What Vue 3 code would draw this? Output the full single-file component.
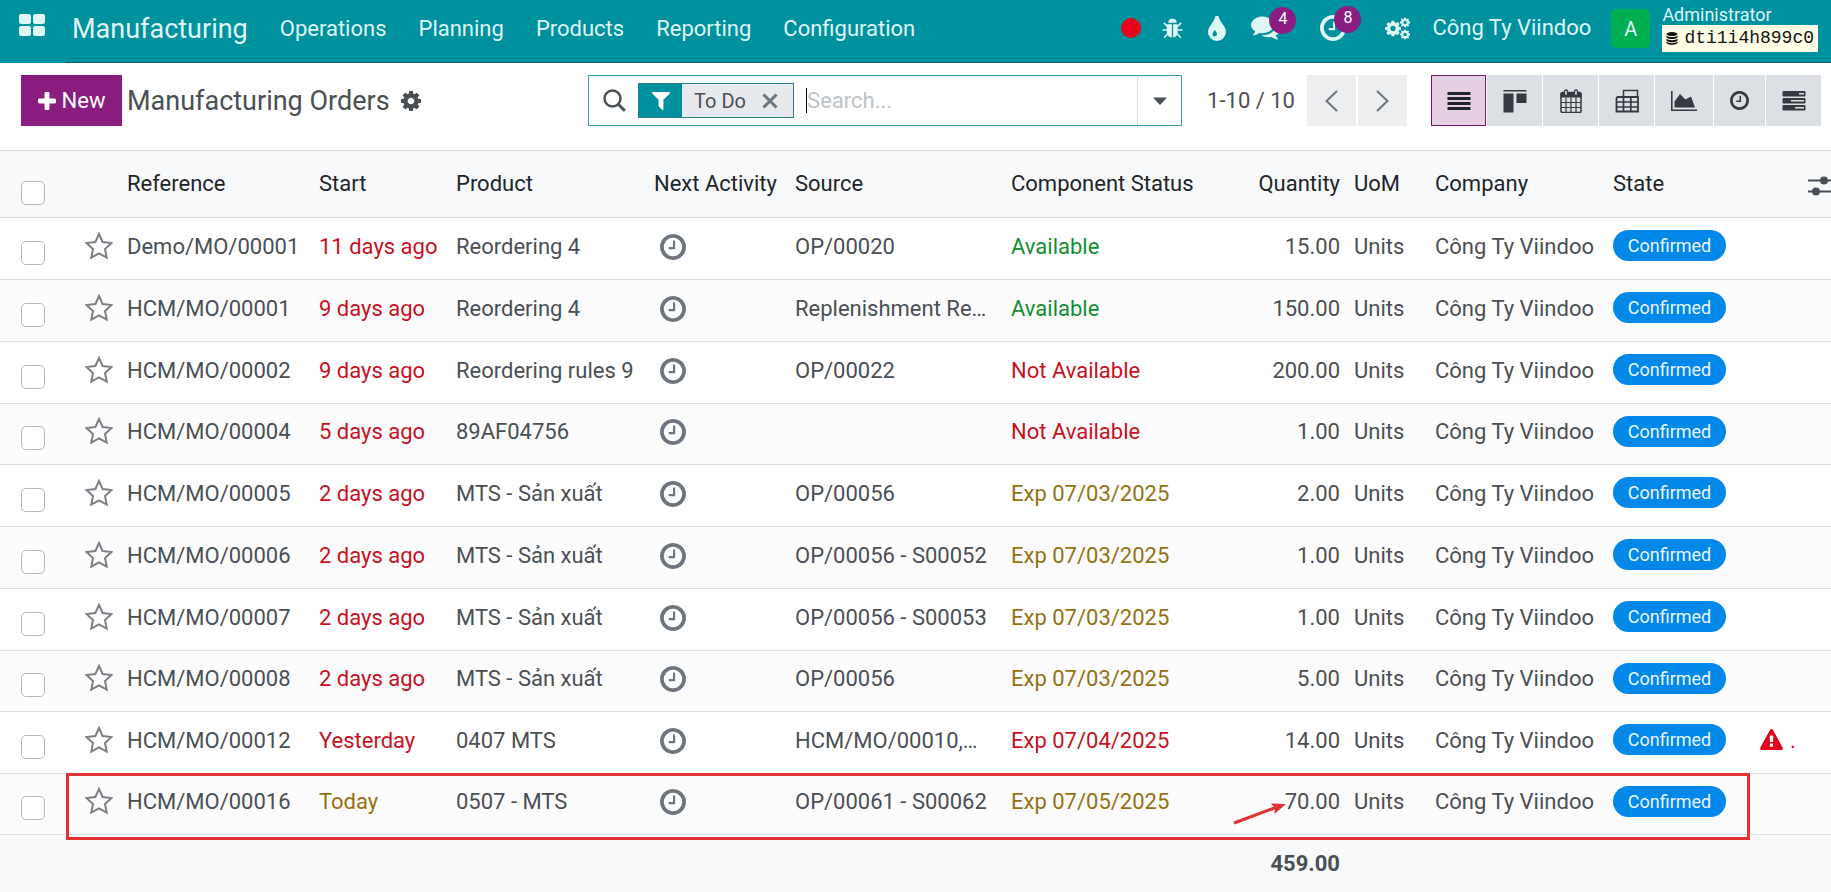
<script setup>
import { ref } from 'vue'

const menus = ['Operations', 'Planning', 'Products', 'Reporting', 'Configuration']

const views = [
  { id: 'list', label: 'List' },
  { id: 'kanban', label: 'Kanban' },
  { id: 'calendar', label: 'Calendar' },
  { id: 'pivot', label: 'Pivot' },
  { id: 'graph', label: 'Graph' },
  { id: 'clock', label: 'Activity' },
  { id: 'gantt', label: 'Gantt' },
]
const activeView = ref('list')
const query = ref('')

const orders = [
  { name: 'Demo/MO/00001', start: '11 days ago', late: 'danger', product: 'Reordering 4', source: 'OP/00020', status: 'Available', tone: 'success', qty: '15.00' },
  { name: 'HCM/MO/00001', start: '9 days ago', late: 'danger', product: 'Reordering 4', source: 'Replenishment Re…', status: 'Available', tone: 'success', qty: '150.00' },
  { name: 'HCM/MO/00002', start: '9 days ago', late: 'danger', product: 'Reordering rules 9', source: 'OP/00022', status: 'Not Available', tone: 'danger', qty: '200.00' },
  { name: 'HCM/MO/00004', start: '5 days ago', late: 'danger', product: '89AF04756', source: '', status: 'Not Available', tone: 'danger', qty: '1.00' },
  { name: 'HCM/MO/00005', start: '2 days ago', late: 'danger', product: 'MTS - Sản xuất', source: 'OP/00056', status: 'Exp 07/03/2025', tone: 'warning', qty: '2.00' },
  { name: 'HCM/MO/00006', start: '2 days ago', late: 'danger', product: 'MTS - Sản xuất', source: 'OP/00056 - S00052', status: 'Exp 07/03/2025', tone: 'warning', qty: '1.00' },
  { name: 'HCM/MO/00007', start: '2 days ago', late: 'danger', product: 'MTS - Sản xuất', source: 'OP/00056 - S00053', status: 'Exp 07/03/2025', tone: 'warning', qty: '1.00' },
  { name: 'HCM/MO/00008', start: '2 days ago', late: 'danger', product: 'MTS - Sản xuất', source: 'OP/00056', status: 'Exp 07/03/2025', tone: 'warning', qty: '5.00' },
  { name: 'HCM/MO/00012', start: 'Yesterday', late: 'danger', product: '0407 MTS', source: 'HCM/MO/00010,…', status: 'Exp 07/04/2025', tone: 'danger', qty: '14.00', alert: true },
  { name: 'HCM/MO/00016', start: 'Today', late: 'warning', product: '0507 - MTS', source: 'OP/00061 - S00062', status: 'Exp 07/05/2025', tone: 'warning', qty: '70.00', marked: true },
]
</script>

<template>
  <svg class="sprite" aria-hidden="true">
    <symbol id="i-apps" viewBox="0 0 26 22"><rect width="12" height="10" rx="2" /><rect x="14" width="12" height="10" rx="2" /><rect y="12" width="12" height="10" rx="2" /><rect x="14" y="12" width="12" height="10" rx="2" /></symbol>
    <symbol id="i-bug" viewBox="0 0 20 20">
      <path d="M6 4.6a4 3.8 0 0 1 8 0z" /><path d="M5 6h4.4v12.6C6.500 18.300 4.500 16 4.500 12.500V6zM10.600 6H15v6.500c0 3.500-1.500 5.800-4.400 6.100z" />
      <path d="M5 8 1.800 4.500M15 8l3.200-3.500M5 11.500H0.500M15 11.500h4.500M5.500 15l-3.500 3.800M14.500 15l3.500 3.800" fill="none" stroke="currentColor" stroke-width="1.500" />
    </symbol>
    <symbol id="i-drop" viewBox="384 128 1024 1408"><path d="M896 1152q0-36-20-69-1-1-15.500-22.500t-25.500-38-25-44-21-50.500q-4-16-21-16t-21 16q-7 23-21 50.500t-25 44-25.500 38-15.500 22.500q-20 33-20 69 0 53 37.500 90.500t90.500 37.500 90.500-37.500 37.500-90.500zm512-128q0 212-150 362t-362 150-362-150-150-362q0-145 81-275 6-9 62.500-90.500t101-151 99.500-178 83-201.500q9-30 34-47t51-17 51.500 17 33.500 47q28 93 83 201.500t99.500 178 101 151 62.500 90.500q81 127 81 275z" /></symbol>
    <symbol id="i-comments" viewBox="0 256 1792 1408"><path d="M1408 768q0 139-94 257t-256.500 186.500-353.500 68.500q-86 0-176-16-124 88-278 128-36 9-86 16h-3q-11 0-20.500-8t-11.500-21q-1-3-1-6.500t.5-6.500 2-6l2.500-5 3.500-5.500 4-5 4.500-5 4-4.500q5-6 23-25t26-29.500 22.500-29 25-38.500 20.500-44q-124-72-195-177t-71-224q0-139 94-257t256.500-186.500 353.500-68.500 353.500 68.500 256.500 186.500 94 257zm384 256q0 120-71 224.500t-195 176.500q10 24 20.500 44t25 38.500 22.500 29 26 29.500 23 25q1 1 4 4.500t4.500 5 4 5 3.500 5.500l2.500 5 2 6 .5 6.500-1 6.500q-3 14-13 22t-22 7q-50-7-86-16-154-40-278-128-90 16-176 16-271 0-472-132 58 4 88 4 161 0 309-45t264-129q125-92 192-212t67-254q0-77-23-152 129 71 204 178t75 230z" /></symbol>
    <symbol id="i-clock" viewBox="128 128 1536 1536"><path d="M1024 544v448q0 14-9 23t-23 9h-320q-14 0-23-9t-9-23v-64q0-14 9-23t23-9h224v-352q0-14 9-23t23-9h64q14 0 23 9t9 23zm416 352q0-148-73-273t-198-198-273-73-273 73-198 198-73 273 73 273 198 198 273 73 273-73 198-198 73-273zm224 0q0 209-103 385.500t-279.500 279.500-385.500 103-385.500-103-279.500-279.500-103-385.500 103-385.500 279.500-279.500 385.500-103 385.500 103 279.500 279.500 103 385.500z" /></symbol>
    <symbol id="i-cog" viewBox="128 128 1536 1536"><path d="M1152 896q0-106-75-181t-181-75-181 75-75 181 75 181 181 75 181-75 75-181zm512-109v222q0 12-8 23t-20 13l-185 28q-19 54-39 91 35 50 107 138 10 12 10 25t-9 23q-27 37-99 108t-94 71q-12 0-26-9l-138-108q-44 23-91 38-16 136-29 186-7 28-36 28h-222q-14 0-24.500-8.500t-11.500-21.500l-28-184q-49-16-90-37l-141 107q-10 9-25 9-14 0-25-11-126-114-165-168-7-10-7-23 0-12 8-23 15-21 51-66.500t54-70.500q-27-50-41-99l-183-27q-13-2-21-12.500t-8-23.500v-222q0-12 8-23t19-13l186-28q14-46 39-92-40-57-107-138-10-12-10-24 0-10 9-23 26-36 98.500-107.500t94.500-71.500q13 0 26 10l138 107q44-23 91-38 16-136 29-186 7-28 36-28h222q14 0 24.500 8.500t11.500 21.500l28 184q49 16 90 37l142-107q9-9 24-9 13 0 25 10 129 119 165 170 7 8 7 22 0 12-8 23-15 21-51 66.500t-54 70.500q26 50 41 98l183 28q13 2 21 12.500t8 23.500z" /></symbol>
    <symbol id="i-cogs" viewBox="0 0 25 22">
      <use href="#i-cog" x="0" y="3" width="16" height="16" /><use href="#i-cog" x="15" y="0" width="10" height="10" /><use href="#i-cog" x="15" y="12" width="10" height="10" />
    </symbol>
    <symbol id="i-db" viewBox="0 0 14 15">
      <ellipse cx="7" cy="2.300" rx="6.500" ry="2.300" />
      <path d="M.5 4.200c2 2 11 2 13 0v1.900c-1 2.700-12 2.700-13 0zM.5 7.900c2 2 11 2 13 0v1.900c-1 2.700-12 2.700-13 0zM.5 11.400c2 2 11 2 13 0v1.400c-1 2.800-12 2.800-13 0z" />
    </symbol>
    <symbol id="i-plus" viewBox="192 128 1408 1408"><path d="M1600 736v192q0 40-28 68t-68 28h-416v416q0 40-28 68t-68 28h-192q-40 0-68-28t-28-68v-416h-416q-40 0-68-28t-28-68v-192q0-40 28-68t68-28h416v-416q0-40 28-68t68-28h192q40 0 68 28t28 68v416h416q40 0 68 28t28 68z" /></symbol>
    <symbol id="i-search" viewBox="0 0 23 23"><g fill="none" stroke="currentColor"><circle cx="9.500" cy="9.500" r="8" stroke-width="2.400" /><path d="m15.500 15.500 6.300 6.300" stroke-width="3" /></g></symbol>
    <symbol id="i-filter" viewBox="191 256 1410 1410"><path d="M1595 295q17 41-14 70l-493 493v742q0 42-39 59-13 5-25 5-27 0-45-19l-256-256q-19-19-19-45v-486l-493-493q-31-29-14-70 17-39 59-39h1280q42 0 59 39z" /></symbol>
    <symbol id="i-close" viewBox="0 0 16 16"><path d="m1.500 1.500 13 13m0-13-13 13" fill="none" stroke="currentColor" stroke-width="3" /></symbol>
    <symbol id="i-caret" viewBox="0 0 14 8"><path d="M0 .5h14L7 8z" /></symbol>
    <symbol id="i-prev" viewBox="0 0 13 22"><path d="M12 1 1.500 11 12 21" fill="none" stroke="currentColor" stroke-width="2" /></symbol>
    <symbol id="i-next" viewBox="0 0 13 22"><path d="m1 1 10.500 10L1 21" fill="none" stroke="currentColor" stroke-width="2" /></symbol>
    <symbol id="i-list" viewBox="0 0 26 24"><path d="M1.500 3h23v3h-23zM1.500 8h23v3h-23zM1.500 13h23v3h-23zM1.500 18h23v3h-23z" /></symbol>
    <symbol id="i-kanban" viewBox="0 0 26 24"><path d="M1.500 1h23v1.500h-23zM1.500 4.500h10V23.500h-10zM14.500 4.500h10v9.500h-10z" /></symbol>
    <symbol id="i-calendar" viewBox="0 0 26 24">
      <path d="M3 5q0-1.500 1.500-1.500h17Q23 3.500 23 5v17q0 1.500-1.500 1.500h-17Q3 23.500 3 22z" fill="none" stroke="currentColor" stroke-width="1.500" />
      <path d="M2.500 4h21v4.500h-21z" /><path d="M8 8.500v15M13 8.500v15M18 8.500v15M3 13.500h20M3 18.500h20" fill="none" stroke="currentColor" stroke-width="1.200" />
      <rect class="ring" x="6.500" y="1" width="3" height="5.500" rx="1.500" stroke="currentColor" stroke-width="1.300" /><rect class="ring" x="16.500" y="1" width="3" height="5.500" rx="1.500" stroke="currentColor" stroke-width="1.300" />
    </symbol>
    <symbol id="i-pivot" viewBox="0 0 26 24"><g fill="none" stroke="currentColor"><path d="M9.500 8V1.500h14V8" stroke-width="1.500" /><path d="M3.500 8H24v14.500H2.500V9z" stroke-width="1.800" /><path d="M9.500 8v14.500M16.800 8v14.500M2 13h22M2 18h22" stroke-width="1.700" /></g></symbol>
    <symbol id="i-graph" viewBox="0 0 26 24"><path d="M0 2h1.600v18.400H26V22H0z" /><path d="M3.500 18.500V12.500L9 5l5.500 5.500L20 7.500l4 11z" /></symbol>
    <symbol id="i-gantt" viewBox="0 0 26 24"><path fill-rule="evenodd" d="M2.500 2h21q1 0 1 1v3.500q0 1-1 1h-21q-1 0-1-1V3q0-1 1-1zM18 4v1.600h5V4zM2.500 9h21q1 0 1 1v3.500q0 1-1 1h-21q-1 0-1-1V10q0-1 1-1zM10 11v1.600h13V11zM2.500 16h21q1 0 1 1v3.500q0 1-1 1h-21q-1 0-1-1V17q0-1 1-1zM14 18v1.600h9V18z" /></symbol>
    <symbol id="i-star" viewBox="0 0 28 28"><path d="m14 2 3.600 8 8.900 1.100-6.500 5.900 1.700 8.600L14 21.300l-7.700 4.300L8 17l-6.500-5.900L10.400 10z" fill="none" stroke="currentColor" stroke-width="2" /></symbol>
    <symbol id="i-sliders" viewBox="0 0 24 20"><path d="M0 3.500h24v2H0zM0 14.500h24v2H0z" /><circle cx="16" cy="4.500" r="4" /><circle cx="8" cy="15.500" r="4" /></symbol>
    <symbol id="i-warn" viewBox="0 0 1792 1664"><path d="M1024 1375v-190q0-14-9.500-23.500t-22.500-9.500h-192q-13 0-22.500 9.500t-9.500 23.500v190q0 14 9.500 23.500t22.500 9.500h192q13 0 22.500-9.500t9.500-23.500zm-2-374l18-459q0-12-10-19-13-11-24-11h-220q-11 0-24 11-10 7-10 21l17 457q0 10 10 16.500t24 6.500h185q14 0 23.500-6.500t10.500-16.500zm-14-934l768 1408q35 63-2 126-17 29-46.500 46t-63.500 17h-1536q-34 0-63.500-17t-46.500-46q-37-63-2-126l768-1408q17-31 47-49t65-18 65 18 47 49z" /></symbol>
  </svg>

  <div class="page">
    <header class="navbar">
      <button class="apps" aria-label="Home menu"><svg><use href="#i-apps" /></svg></button>
      <nav class="menu">
        <a class="brand" href="#">Manufacturing</a>
        <a v-for="m in menus" :key="m" href="#">{{ m }}</a>
      </nav>
      <div class="systray">
        <span class="record"></span>
        <button class="tool" aria-label="Debug"><svg class="bug"><use href="#i-bug" /></svg></button>
        <button class="tool" aria-label="Theme"><svg class="drop"><use href="#i-drop" /></svg></button>
        <button class="tool" aria-label="Messages"><svg class="talk"><use href="#i-comments" /></svg><span class="count">4</span></button>
        <button class="tool" aria-label="Activities"><svg class="watch"><use href="#i-clock" /></svg><span class="count">8</span></button>
        <button class="tool" aria-label="Settings"><svg class="gears"><use href="#i-cogs" /></svg></button>
        <a class="company" href="#">Công Ty Viindoo</a>
        <span class="avatar">A</span>
        <div class="user">
          <span class="who">Administrator</span>
          <span class="dbname"><svg><use href="#i-db" /></svg>dti1i4h899c0</span>
        </div>
      </div>
    </header>

    <section class="control">
      <button class="new"><svg><use href="#i-plus" /></svg>New</button>
      <h1>Manufacturing Orders</h1>
      <button class="gear" aria-label="Actions"><svg><use href="#i-cog" /></svg></button>
      <div class="search">
        <svg class="lens"><use href="#i-search" /></svg>
        <div class="facet">
          <span class="facet-icon"><svg><use href="#i-filter" /></svg></span>
          <span>To Do</span>
          <button aria-label="Remove filter"><svg><use href="#i-close" /></svg></button>
        </div>
        <input v-model="query" type="text" placeholder="Search..." aria-label="Search">
        <button class="toggle" aria-label="Search options"><svg><use href="#i-caret" /></svg></button>
      </div>
      <span class="range">1-10 / 10</span>
      <div class="pager">
        <button aria-label="Previous"><svg><use href="#i-prev" /></svg></button>
        <button aria-label="Next"><svg><use href="#i-next" /></svg></button>
      </div>
      <div class="views">
        <button v-for="v in views" :key="v.id" :class="[v.id, { active: v.id === activeView }]" :aria-label="v.label" @click="activeView = v.id">
          <svg><use :href="'#i-' + v.id" /></svg>
        </button>
      </div>
    </section>

    <table class="orders">
      <colgroup>
        <col class="c-check"><col class="c-star"><col class="c-ref"><col class="c-start"><col class="c-product"><col class="c-next"><col class="c-source"><col><col class="c-qty"><col class="c-uom"><col class="c-company"><col class="c-state"><col class="c-alert"><col class="c-opt">
      </colgroup>
      <thead>
        <tr>
          <th class="check"><input type="checkbox" aria-label="Select all"></th>
          <th></th>
          <th>Reference</th><th>Start</th><th>Product</th><th>Next Activity</th><th>Source</th><th>Component Status</th>
          <th class="num">Quantity</th><th>UoM</th><th>Company</th><th>State</th><th></th>
          <th class="opt"><button aria-label="Optional columns"><svg><use href="#i-sliders" /></svg></button></th>
        </tr>
      </thead>
      <tbody>
        <tr v-for="o in orders" :key="o.name">
          <td class="check"><input type="checkbox" :aria-label="'Select ' + o.name"></td>
          <td class="graphic"><button class="star" aria-label="Priority"><svg><use href="#i-star" /></svg></button></td>
          <td>{{ o.name }}</td>
          <td :class="o.late">{{ o.start }}</td>
          <td>{{ o.product }}</td>
          <td><button class="activity" aria-label="Schedule activity"><svg><use href="#i-clock" /></svg></button></td>
          <td>{{ o.source }}</td>
          <td :class="o.tone">{{ o.status }}</td>
          <td class="num">
            {{ o.qty }}
            <svg v-if="o.marked" class="arrow" viewBox="0 0 54 24"><path d="M1 22 44 6" fill="none" stroke="#e03232" stroke-width="3" /><path d="M53 3 38 2.500l4 4.500-.5 6z" fill="#e03232" /></svg>
          </td>
          <td>Units</td>
          <td>Công Ty Viindoo</td>
          <td class="graphic"><span class="badge">Confirmed</span></td>
          <td class="danger alert"><template v-if="o.alert"><svg><use href="#i-warn" /></svg>.</template></td>
          <td><span v-if="o.marked" class="outline"></span></td>
        </tr>
      </tbody>
      <tfoot>
        <tr><td colspan="8"></td><td class="num">459.00</td><td colspan="5"></td></tr>
      </tfoot>
    </table>
  </div>
</template>

<style>
body {
  background: #f8f9fb;
}
</style>

<style scoped>
.page {
  font-family: Roboto, "Liberation Sans", sans-serif;
  font-size: 22px;
  line-height: 32px;
  color: #4a4f54;
  min-height: 100vh;
  overflow: hidden;
}
.sprite {
  position: absolute;
  width: 0;
  height: 0;
}
svg {
  display: block;
  flex: none;
  fill: currentColor;
}
.ring {
  fill: #dce0e4;
}
button {
  display: flex;
  align-items: center;
  justify-content: center;
  margin: 0;
  padding: 0;
  border: 0;
  background: none;
  color: inherit;
  font: inherit;
}
a {
  color: inherit;
  text-decoration: none;
}

.navbar {
  display: flex;
  height: 63px;
  background: #00919f;
  color: #dff6f7;
}
.apps {
  width: 66px;
  height: 50px;
  padding-right: 3px;
}
.apps svg {
  width: 26px;
  height: 22px;
}
.menu {
  display: flex;
  gap: 32px;
  flex: 1;
  padding: 13px 0 0 6px;
  border-bottom: 1px solid #12606a;
}
.brand {
  font-size: 27px;
}
.systray {
  display: flex;
  align-items: center;
  padding: 0 13px 6px 0;
  border-bottom: 1px solid #12606a;
}
.record {
  width: 20px;
  height: 20px;
  margin-right: 21px;
  border-radius: 50%;
  background: #e8051b;
}
.tool {
  position: relative;
  margin-right: 25px;
}
.bug {
  width: 21px;
  height: 21px;
}
.drop {
  width: 18px;
  height: 25px;
}
.talk {
  width: 29px;
  height: 24px;
  margin-right: 15px;
}
.watch {
  width: 26px;
  height: 26px;
  margin-right: 14px;
}
.gears {
  width: 25px;
  height: 23px;
}
.tool:nth-of-type(5) {
  margin-right: 22px;
}
.count {
  position: absolute;
  top: -9px;
  right: -1px;
  width: 27px;
  height: 27px;
  border-radius: 50%;
  background: #8b1c80;
  color: #fff;
  font-size: 16px;
  line-height: 24px;
  text-align: center;
}
.avatar {
  width: 39px;
  height: 39px;
  margin: 0 12px 0 20px;
  border-radius: 5px;
  background: #00b050;
  font-size: 20px;
  line-height: 40px;
  text-align: center;
}
.user {
  display: flex;
  flex-direction: column;
}
.who {
  font-size: 18px;
  line-height: 20px;
}
.dbname {
  display: flex;
  align-items: center;
  gap: 6px;
  padding: 0 4px;
  background: #feffe6;
  color: #111;
  font-family: "Liberation Mono", monospace;
  font-size: 18px;
  line-height: 27px;
}
.dbname svg {
  width: 12px;
  height: 15px;
}

.control {
  display: flex;
  align-items: center;
  height: 87px;
  padding: 0 10px 12px 21px;
  padding-top: 0;
  box-sizing: border-box;
  background: #fff;
}
.new {
  gap: 6px;
  width: 101px;
  height: 51px;
  background: #8b1c80;
  color: #fff;
}
.new svg {
  width: 18px;
  height: 18px;
}
h1 {
  margin: 0 11px 0 5px;
  font-size: 27px;
  font-weight: 400;
  white-space: nowrap;
}
.gear svg {
  width: 20px;
  height: 20px;
}
.search {
  display: flex;
  align-items: center;
  width: 594px;
  height: 51px;
  margin-left: auto;
  box-sizing: border-box;
  border: 1px solid #3d9ea6;
}
.lens {
  width: 23px;
  height: 23px;
  margin: 0 12px 0 14px;
}
.facet {
  display: flex;
  align-items: center;
  width: 156px;
  height: 35px;
  margin-right: 12px;
  box-sizing: border-box;
  border: 1px solid #2b7e87;
  background: #e7e9ed;
  font-size: 20px;
}
.facet-icon {
  display: flex;
  align-items: center;
  justify-content: center;
  width: 43px;
  height: 33px;
  margin-right: 12px;
  background: #00919f;
  color: #fff;
}
.facet-icon svg {
  width: 18px;
  height: 18px;
}
.facet button {
  margin-left: 16px;
  color: #6c757d;
}
.facet button svg {
  width: 16px;
  height: 16px;
}
.search input {
  flex: 1;
  min-width: 0;
  height: 25px;
  padding: 0;
  border: 0;
  border-left: 1px solid #000;
  outline: 0;
  background: none;
  color: inherit;
  font: inherit;
}
.search input::placeholder {
  color: #bec4ca;
  opacity: 1;
}
.toggle {
  width: 44px;
  height: 49px;
  border-left: 1px solid #d8dadd;
}
.toggle svg {
  width: 14px;
  height: 8px;
}
.range {
  margin: 0 12px 0 25px;
  white-space: nowrap;
}
.pager {
  display: flex;
  gap: 2px;
  margin-right: 24px;
  color: #6f7479;
}
.pager button {
  width: 49px;
  height: 51px;
  background: #eceef0;
}
.pager svg {
  width: 13px;
  height: 22px;
}
.views {
  display: flex;
  gap: 1px;
}
.views button {
  width: 55px;
  height: 51px;
  box-sizing: border-box;
  background: #dce0e4;
  color: #343a40;
}
.views button.active {
  border: 1px solid #701d68;
  background: #e6cfe2;
  color: #212529;
}
.views svg {
  width: 26px;
  height: 24px;
}
.views .graph {
  width: 58px;
}
.views .clock {
  width: 51px;
}
.views .clock svg {
  width: 19px;
  height: 19px;
}

.orders {
  width: 100%;
  table-layout: fixed;
  border-collapse: separate;
  border-spacing: 0;
  border-top: 1px solid #dcdee2;
}
.c-check { width: 78px; }
.c-star { width: 42px; }
.c-ref { width: 192px; }
.c-start { width: 137px; }
.c-product { width: 198px; }
.c-next { width: 141px; }
.c-source { width: 216px; }
.c-qty { width: 96px; }
.c-uom { width: 81px; }
.c-company { width: 178px; }
.c-state { width: 147px; }
.c-alert { width: 48px; }
.c-opt { width: 30px; }

th,
td {
  height: 62px;
  padding: 0 7px 4px;
  box-sizing: border-box;
  border-bottom: 1px solid #dcdee2;
  text-align: left;
  white-space: nowrap;
}
th {
  height: 67px;
  padding: 0 7px;
  color: #212529;
  font-weight: 400;
}
.graphic {
  padding-bottom: 6px;
}
.num {
  position: relative;
  text-align: right;
}
.opt {
  padding: 4px 0 0 7px;
}
.opt svg {
  width: 24px;
  height: 20px;
  color: #495057;
}
tbody tr {
  position: relative;
  background: #fff;
}
tbody tr:nth-child(even) {
  background: #fcfcfc;
}
tbody tr:nth-child(4n) td,
tbody tr:last-child td {
  height: 61px;
}
.check {
  padding: 8px 0 0 21px;
}
th.check {
  padding-top: 18px;
}
.check input {
  display: block;
  appearance: none;
  width: 24px;
  height: 24px;
  margin: 0;
  box-sizing: border-box;
  border: 1px solid #b4b8bd;
  border-radius: 5px;
  background: #fff;
}
.star {
  color: #7b8087;
}
.star svg {
  width: 28px;
  height: 28px;
}
.activity {
  margin-left: 6px;
  color: #6c757d;
}
.activity svg {
  width: 26px;
  height: 26px;
}
.danger { color: #c9101f; }
.warning { color: #967112; }
.success { color: #128e30; }
.badge {
  display: block;
  width: 113px;
  border-radius: 16px;
  background: #0188e8;
  color: #e9f6ff;
  font-size: 18px;
  line-height: 31px;
  text-align: center;
}
.alert svg {
  display: inline-block;
  width: 23px;
  height: 21px;
  margin-right: 7px;
  vertical-align: -2px;
  color: #e2001a;
}
tfoot td {
  height: 57px;
  padding-bottom: 0;
  border: 0;
  font-weight: 700;
}
.arrow {
  position: absolute;
  right: 60px;
  top: 27px;
  width: 54px;
  height: 24px;
}
.outline {
  position: absolute;
  top: -1px;
  bottom: -5px;
  left: 66px;
  right: 81px;
  border: 3px solid #e03232;
  pointer-events: none;
}
</style>
